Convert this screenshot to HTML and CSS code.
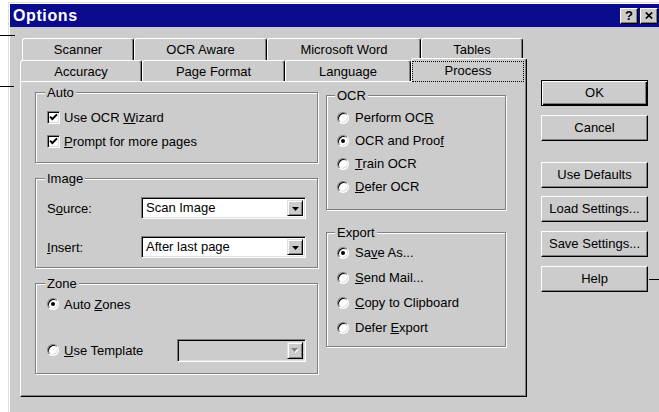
FILE: index.html
```html
<!DOCTYPE html>
<html lang="en">
<head>
<meta charset="utf-8">
<title>Options</title>
<link rel="stylesheet" href="styles.css">
</head>
<body>
<div class="window">
  <div class="titlebar">
    <span class="title">Options</span>
    <div class="title-buttons">
      <span class="tbtn help-q">?</span>
      <span class="tbtn">
        <svg width="8" height="7" viewBox="0 0 8 7"><path d="M0.8 0.5 L7.2 6.5 M7.2 0.5 L0.8 6.5" stroke="#000" stroke-width="1.7" fill="none"/></svg>
      </span>
    </div>
  </div>

  <div class="client">
    <div class="tabs">
      <div class="tab-row back">
        <div class="tab w-scanner">Scanner</div>
        <div class="tab w-ocraware">OCR Aware</div>
        <div class="tab w-word">Microsoft Word</div>
        <div class="tab w-tables">Tables</div>
      </div>
      <div class="tab-row front">
        <div class="tab w-accuracy">Accuracy</div>
        <div class="tab w-pageformat">Page Format</div>
        <div class="tab w-language">Language</div>
        <div class="tab w-process active"><span class="focus">Process</span></div>
      </div>

      <div class="panel">
        <div class="col col-left">
          <div class="group g-auto">
            <div class="group-title">Auto</div>
            <div class="row chk-row first">
              <span class="checkbox"><svg width="9" height="9" viewBox="0 0 9 9"><path d="M1 3.6 L3.4 6 L8 1.4" stroke="#000" stroke-width="2" fill="none"/></svg></span>
              <span>Use OCR <u>W</u>izard</span>
            </div>
            <div class="row chk-row">
              <span class="checkbox"><svg width="9" height="9" viewBox="0 0 9 9"><path d="M1 3.6 L3.4 6 L8 1.4" stroke="#000" stroke-width="2" fill="none"/></svg></span>
              <span><u>P</u>rompt for more pages</span>
            </div>
          </div>

          <div class="group g-image">
            <div class="group-title">Image</div>
            <div class="row field-row first">
              <span class="field-label">S<u>o</u>urce:</span>
              <div class="combo">
                <span class="combo-text">Scan Image</span>
                <span class="combo-btn"><svg width="7" height="4" viewBox="0 0 7 4"><path d="M0 0 H7 L3.5 4 Z" fill="#000"/></svg></span>
              </div>
            </div>
            <div class="row field-row second">
              <span class="field-label"><u>I</u>nsert:</span>
              <div class="combo">
                <span class="combo-text">After last page</span>
                <span class="combo-btn"><svg width="7" height="4" viewBox="0 0 7 4"><path d="M0 0 H7 L3.5 4 Z" fill="#000"/></svg></span>
              </div>
            </div>
          </div>

          <div class="group g-zone">
            <div class="group-title">Zone</div>
            <div class="row radio-row first">
              <span class="radio on"></span>
              <span>Auto <u>Z</u>ones</span>
            </div>
            <div class="row radio-row template">
              <span class="radio"></span>
              <span class="template-label"><u>U</u>se Template</span>
              <div class="combo disabled">
                <span class="combo-text"></span>
                <span class="combo-btn"><svg width="8" height="5" viewBox="0 0 8 5"><path d="M1 1 H8 L4.5 5 Z" fill="#fff"/><path d="M0 0 H7 L3.5 4 Z" fill="#808080"/></svg></span>
              </div>
            </div>
          </div>
        </div>

        <div class="col col-right">
          <div class="group g-ocr">
            <div class="group-title">OCR</div>
            <div class="radio-list">
              <div class="row radio-row"><span class="radio"></span><span>Perform OC<u>R</u></span></div>
              <div class="row radio-row"><span class="radio on"></span><span>OCR and Proo<u>f</u></span></div>
              <div class="row radio-row"><span class="radio"></span><span><u>T</u>rain OCR</span></div>
              <div class="row radio-row"><span class="radio"></span><span><u>D</u>efer OCR</span></div>
            </div>
          </div>

          <div class="group g-export">
            <div class="group-title">Export</div>
            <div class="radio-list">
              <div class="row radio-row"><span class="radio on"></span><span>Sa<u>v</u>e As...</span></div>
              <div class="row radio-row"><span class="radio"></span><span><u>S</u>end Mail...</span></div>
              <div class="row radio-row"><span class="radio"></span><span><u>C</u>opy to Clipboard</span></div>
              <div class="row radio-row"><span class="radio"></span><span>Defer <u>E</u>xport</span></div>
            </div>
          </div>
        </div>
      </div>
    </div>

    <div class="buttons">
      <div class="btn default">OK</div>
      <div class="btn">Cancel</div>
      <div class="btn spaced">Use Defaults</div>
      <div class="btn tight">Load Settings...</div>
      <div class="btn">Save Settings...</div>
      <div class="btn">Help</div>
    </div>
  </div>
</div>

<span class="callout callout-tabs-back"></span>
<span class="callout callout-tabs-front"></span>
<span class="callout callout-help"></span>
</body>
</html>
```

FILE: styles.css
```css
* {
  box-sizing: border-box;
}

html, body {
  margin: 0;
  height: 100%;
  overflow: hidden;
  background: #fff;
}

body {
  position: relative;
  font-family: "Liberation Sans", Arial, sans-serif;
  font-size: 13px;
  color: #000;
}

u {
  text-decoration: underline;
  text-underline-offset: 1px;
}

/* ---- window frame ---- */
.window {
  margin: 2px 0 0 8px;
  width: 651px;
  height: 430px;
  background: #cccccc;
  border-top: 1px solid #dfdfdf;
  border-left: 1px solid #dfdfdf;
  padding: 1px 0 0 1px;
  box-shadow: inset 1px 1px 0 #fff;
}

.titlebar {
  height: 23px;
  background: #0a0a8c;
  display: flex;
  align-items: center;
  justify-content: space-between;
  padding-left: 3px;
}

.title {
  color: #fff;
  font-weight: bold;
  font-size: 16px;
  letter-spacing: 0.6px;
  line-height: 23px;
}

.title-buttons {
  display: flex;
  gap: 2px;
  margin-right: 1px;
}

.tbtn {
  width: 18px;
  height: 16px;
  background: #cccccc;
  border: 1px solid;
  border-color: #fff #000 #000 #fff;
  box-shadow: inset -1px -1px 0 #808080;
  display: flex;
  align-items: center;
  justify-content: center;
}

.help-q {
  font-weight: bold;
  font-size: 13px;
  line-height: 14px;
}

/* ---- client area ---- */
.client {
  display: flex;
  align-items: flex-start;
  padding: 11px 0 0 10px;
}

.tabs {
  width: 507px;
  flex: none;
}

.tab-row {
  display: flex;
}

.tab-row.back {
  height: 22px;
  margin-left: 2px;
}

.tab-row.front {
  height: 21px;
}

.tab {
  flex: none;
  height: 100%;
  border: 1px solid;
  border-bottom: 0;
  border-color: #fff #000 transparent #fff;
  border-radius: 3px 3px 0 0;
  box-shadow: inset -1px 0 0 #808080;
  background: #cccccc;
  text-align: center;
  padding-top: 3px;
  line-height: 15px;
}

.w-scanner { width: 112px; }
.w-ocraware { width: 133px; }
.w-word { width: 154px; }
.w-tables { width: 102px; }
.w-accuracy { width: 122px; }
.w-pageformat { width: 143px; }
.w-language { width: 126px; }
.w-process { width: 116px; }

/* selected tab sits over the panel's top edge */
.tab.active {
  position: relative;
  z-index: 1;
  height: 24px;
  margin-top: -2px;
  padding: 1px 2px 1px 0;
}

.focus {
  display: block;
  height: 21px;
  margin-top: 1px;
  border: 1px dotted #000;
  line-height: 17px;
}

.panel {
  height: 316px;
  border: 1px solid;
  border-color: #fff #000 #000 #fff;
  box-shadow: inset -1px -1px 0 #808080;
  display: flex;
  gap: 8px;
  padding: 10px 0 0 14px;
}

/* ---- group boxes ---- */
.col-left {
  width: 283px;
}

.col-right {
  width: 180px;
  padding-top: 3px;
}

.group {
  border: 1px solid #808080;
  box-shadow: inset 1px 1px 0 #fff, 1px 1px 0 #fff;
  padding: 0 11px;
}

.group-title {
  width: max-content;
  margin: -8px 0 0 -2px;
  padding: 0 2px;
  background: #cccccc;
  line-height: 15px;
}

.g-auto { height: 71px; }
.g-image { height: 90px; margin-top: 15px; }
.g-zone { height: 91px; margin-top: 15px; }
.g-ocr { height: 115px; padding-left: 10px; }
.g-export { height: 115px; margin-top: 22px; padding-left: 10px; }

.row {
  display: flex;
  align-items: center;
}

.chk-row {
  height: 24px;
}

.chk-row.first {
  margin-top: 5px;
}

.checkbox {
  width: 13px;
  height: 13px;
  flex: none;
  margin-right: 4px;
  background: #fff;
  border: 1px solid;
  border-color: #808080 #fff #fff #808080;
  box-shadow: inset 1px 1px 0 #000, inset -1px -1px 0 #dfdfdf;
  display: flex;
  align-items: center;
  justify-content: center;
}

.field-row {
  height: 22px;
}

.field-row.first {
  margin-top: 11px;
}

.field-row.second {
  margin-top: 17px;
}

.field-label {
  width: 94px;
  flex: none;
}

.combo {
  width: 166px;
  height: 22px;
  background: #fff;
  border: 1px solid;
  border-color: #808080 #fff #fff #808080;
  box-shadow: inset 1px 1px 0 #000, inset -1px -1px 0 #dfdfdf;
  padding: 2px;
  display: flex;
  align-items: stretch;
}

.combo-text {
  flex: 1;
  padding-left: 2px;
  line-height: 16px;
}

.combo-btn {
  width: 16px;
  flex: none;
  background: #cccccc;
  border: 1px solid;
  border-color: #dfdfdf #000 #000 #dfdfdf;
  box-shadow: inset 1px 1px 0 #fff, inset -1px -1px 0 #808080;
  display: flex;
  align-items: center;
  justify-content: center;
  padding-top: 1px;
}

.combo.disabled {
  width: 129px;
  height: 23px;
  background: #cccccc;
}

.radio-row {
  height: 24px;
}

.radio-row.first {
  margin-top: 1px;
}

.radio-row.template {
  margin-top: 22px;
}

.template-label {
  width: 113px;
  flex: none;
}

.radio {
  width: 12px;
  height: 12px;
  flex: none;
  margin-right: 5px;
  border-radius: 50%;
  background: #fff;
  border: 1px solid;
  border-color: #808080 #fff #fff #808080;
  box-shadow: inset 1px 1px 0 #000, inset -1px -1px 0 #dfdfdf;
  display: flex;
  align-items: center;
  justify-content: center;
}

.radio.on::after {
  content: "";
  width: 4px;
  height: 4px;
  border-radius: 50%;
  background: #000;
}

.g-ocr .radio-list {
  margin-top: 3px;
}

.g-ocr .radio-row {
  height: 23px;
}

.g-export .radio-row {
  height: 25px;
}

.g-ocr .radio,
.g-export .radio {
  margin-right: 6px;
}

/* ---- command buttons ---- */
.buttons {
  margin: 42px 0 0 14px;
  display: flex;
  flex-direction: column;
  gap: 9px;
}

.btn {
  width: 107px;
  height: 26px;
  border: 1px solid;
  border-color: #fff #000 #000 #fff;
  box-shadow: inset -1px -1px 0 #808080;
  text-align: center;
  line-height: 24px;
}

.btn.default {
  border-color: #000;
  box-shadow: inset 1px 1px 0 #fff, inset -1px -1px 0 #000, inset -2px -2px 0 #808080;
}

.btn.spaced {
  margin-top: 12px;
}

.btn.tight {
  margin-top: -1px;
}

/* ---- callout leader lines ---- */
.callout {
  position: absolute;
  height: 1px;
  background: #000;
}

.callout-tabs-back {
  top: 35px;
  left: 0;
  width: 15px;
}

.callout-tabs-front {
  top: 86px;
  left: 0;
  width: 14px;
}

.callout-help {
  top: 279px;
  left: 649px;
  width: 10px;
}
```
